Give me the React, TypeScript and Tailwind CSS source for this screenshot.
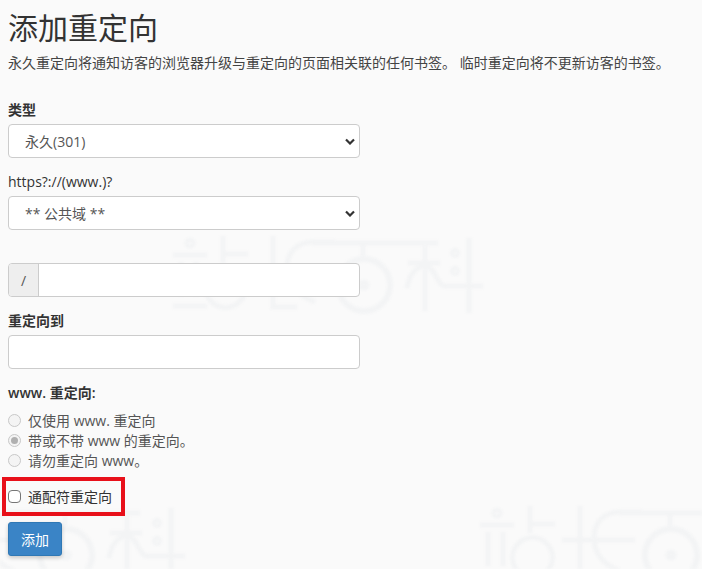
const cjk = '"Open Sans","Noto Sans CJK SC",sans-serif';

function Mark({ x, y }: { x: number; y: number }) {
  return (
    <g transform={`translate(${x} ${y})`} fill="none" stroke="#f3f4f5" strokeWidth="5">
      <circle cx="17" cy="7" r="3.5" strokeWidth="4" />
      <path d="M0 19H34M8 26V60M23 26V60M0 70H34" />
      <path d="M50 0V27M50 18H75" />
      <circle cx="52.5" cy="51.5" r="20" />
      <path d="M100 0V71H124M82 34H155" />
      <path d="M162 6H140C122 6 114 18 114 32C114 50 126 60 142 66" />
      <path d="M140 7H265M190 7V22" />
      <circle cx="191" cy="49" r="26" strokeWidth="6" />
      <circle cx="191" cy="49" r="3" />
      <path d="M252 10V75M235 27H267M234 52C236 38 244 30 252 30C262 30 264 50 272 50H310" />
      <circle cx="282" cy="17" r="3" strokeWidth="4" />
      <circle cx="282" cy="35" r="3" strokeWidth="4" />
      <path d="M296 2V77" />
    </g>
  );
}

function Radio({ label, checked }: { label: string; checked?: boolean }) {
  return (
    <label className="flex h-5 items-center gap-[7px] text-[14px] text-[#555]">
      <span className="flex h-[13px] w-[13px] items-center justify-center rounded-full border border-[#c8c8c8] bg-[#f4f4f4]">
        {checked && <span className="h-[7px] w-[7px] rounded-full bg-[#b0b0b0]" />}
      </span>
      {label}
    </label>
  );
}

function Chevron() {
  return (
    <svg width="10" height="7" viewBox="0 0 10 7" fill="none" stroke="#333" strokeWidth="2.2">
      <path d="M1 1.5L5 5.5L9 1.5" />
    </svg>
  );
}

export default function App() {
  return (
    <div className="relative h-[569px] w-[702px] overflow-hidden bg-[#fafafa] px-2 text-[#333]" style={{ fontFamily: cjk }}>
      <svg className="pointer-events-none absolute inset-0 blur-[0.8px]" width="702" height="569">
        <Mark x={173} y={236} />
        <Mark x={-125} y={506} />
        <Mark x={480} y={506} />
      </svg>
      <div className="relative">
        <h1 className="pt-[8px] text-[30px] leading-[40px] font-normal">添加重定向</h1>
        <p className="mt-[5px] h-5 text-[14px] leading-5 whitespace-nowrap text-[#444]">永久重定向将通知访客的浏览器升级与重定向的页面相关联的任何书签。 临时重定向将不更新访客的书签。</p>
        <label className="mt-[27px] block h-5 text-[14px] leading-5 font-bold">类型</label>
        <div className="mt-[4px] flex h-[34px] w-[352px] items-center justify-between rounded border border-[#ccc] bg-white pr-[4px] pl-[16px] text-[14px] text-[#555]">
          <span>永久(301)</span>
          <Chevron />
        </div>
        <label className="mt-[14px] block h-5 text-[14px] leading-5">https?://(www.)?</label>
        <div className="mt-[4px] flex h-[34px] w-[352px] items-center justify-between rounded border border-[#ccc] bg-white pr-[4px] pl-[16px] text-[14px] text-[#555]">
          <span>** 公共域 **</span>
          <Chevron />
        </div>
        <div className="mt-[33px] flex h-[34px] w-[352px] overflow-hidden rounded border border-[#ccc] bg-white">
          <span className="flex w-[30px] items-center justify-center border-r border-[#ccc] bg-[#eee] text-[14px] text-[#555]">/</span>
          <input className="min-w-0 flex-1 bg-transparent" />
        </div>
        <label className="mt-[14px] block h-5 text-[14px] leading-5 font-bold">重定向到</label>
        <input className="mt-[4px] block h-[34px] w-[352px] rounded border border-[#ccc] bg-white" />
        <div className="mt-[14px] h-5 text-[14px] leading-5 font-semibold">www. 重定向:</div>
        <div className="mt-[7px] flex flex-col">
          <Radio label="仅使用 www. 重定向" />
          <Radio label="带或不带 www 的重定向。" checked />
          <Radio label="请勿重定向 www。" />
        </div>
        <div className="relative mt-[7px] flex h-[39px] items-center gap-[7px] text-[14px]">
          <span className="h-[13px] w-[13px] rounded-sm border border-[#767676] bg-white" />
          通配符重定向
          <div className="absolute top-0 -left-[6px] h-[39px] w-[123px] border-[4px] border-[#e8101a]" />
        </div>
        <button className="mt-[6px] block h-[34px] w-[54px] rounded-[3px] border border-[#2f78b5] bg-[#3a84c6] text-[14px] text-white shadow-[0_2px_4px_rgba(0,0,0,0.2)]">添加</button>
      </div>
    </div>
  );
}
